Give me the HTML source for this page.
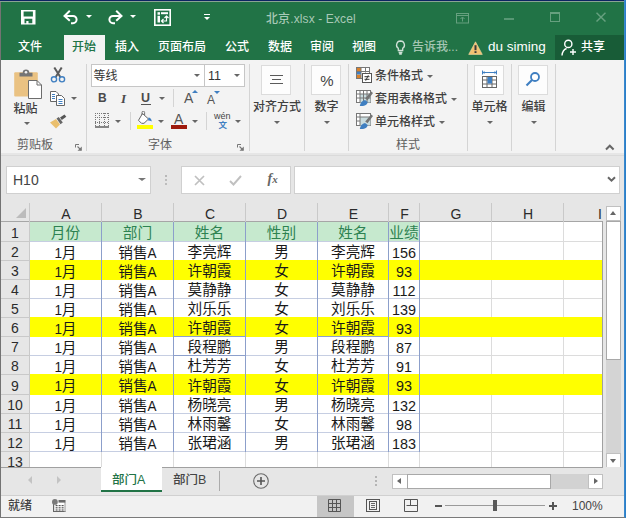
<!DOCTYPE html><html lang="zh"><head><meta charset="utf-8"><title>北京.xlsx - Excel</title><style>
*{box-sizing:border-box;margin:0;padding:0}
html,body{width:626px;height:518px;overflow:hidden;background:#fff}
body{position:relative;font-family:"Liberation Sans","Noto Sans CJK SC",sans-serif;font-size:12px;color:#444}
.a{position:absolute}
.t{position:absolute;white-space:nowrap;line-height:1;font-weight:500}
.c{text-align:center}
.w{color:#fff}
.sep{position:absolute;width:1px;background:#d4d4d4}
.ar{position:absolute;width:0;height:0;border-left:3px solid transparent;border-right:3px solid transparent;border-top:3px solid #666}
.cell{position:absolute;white-space:nowrap;text-align:center;font-size:14.670px;color:#1a1a1a;line-height:19px;height:19px}
.rh{position:absolute;left:1px;width:28px;text-align:center;font-size:14px;color:#2b2b2b;line-height:19px}
.ch{position:absolute;top:205px;text-align:center;font-size:14px;color:#2b2b2b;line-height:18px}
.l{display:inline-block;font-size:15px;transform:scaleX(0.900);margin:0 -0.500px}
.lbl{position:absolute;white-space:nowrap;line-height:1;font-size:12px;color:#606060}
.bx{position:absolute;background:#fdfdfd;border:1px solid #dcdcdc}
</style></head><body>
<div class="a" style="left:0;top:0;width:626px;height:61px;background:#75a68b"></div><div class="a" style="left:0;top:0;width:626px;height:60px;background:#217346"></div>
<div class="a" style="left:0;top:0;width:626px;height:1px;background:#0c2461"></div>
<div class="a" style="left:0;top:1px;width:626px;height:1px;background:#8aa394"></div>
<svg class="a" style="left:21px;top:10px" width="15" height="15" viewBox="0 0 15 15"><path fill-rule="evenodd" d="M0 0h14.500v14.500h-14.500z M2.600 1.500v5h9.300v-5z M3.500 8.800v4.500h1.800v-2.300h2.200v2.300h3.800v-4.500z" fill="#fff"/></svg>
<svg class="a" style="left:63px;top:9.500px" width="17" height="16" viewBox="0 0 17 16"><path d="M1.500 6h8.500a3.600 3.600 0 0 1 0 7.200h-2" fill="none" stroke="#fff" stroke-width="2"/><path d="M6.800 0.800l-5.300 5.200 5.300 4.800" fill="none" stroke="#fff" stroke-width="2"/></svg>
<div class="ar" style="left:86px;top:15px;border-top-color:#fff"></div>
<svg class="a" style="left:106px;top:9.500px" width="17" height="16" viewBox="0 0 17 16"><g transform="translate(17,0) scale(-1,1)"><path d="M1.500 6h8.500a3.600 3.600 0 0 1 0 7.200h-2" fill="none" stroke="#fff" stroke-width="2"/><path d="M6.800 0.800l-5.300 5.200 5.300 4.800" fill="none" stroke="#fff" stroke-width="2"/></g></svg>
<div class="ar" style="left:130px;top:15px;border-top-color:#fff"></div>
<svg class="a" style="left:153.500px;top:8.500px" width="17" height="17" viewBox="0 0 17 17"><rect x="0.800" y="0.800" width="15.400" height="15.400" fill="none" stroke="#fff" stroke-width="1.600"/><rect x="3.500" y="3.200" width="2.500" height="2.500" fill="#fff"/><rect x="7" y="3.200" width="7" height="2" fill="#fff"/><rect x="3.500" y="6.800" width="2.500" height="6.700" fill="#fff"/><path d="M12.500 7.500v4.500h-5 M10.500 9l2-2 2 2 M9.500 10l-2 2 2 2" fill="none" stroke="#fff" stroke-width="1.200"/></svg>
<div class="a" style="left:204px;top:14px;width:6px;height:1px;background:#fff"></div><div class="ar" style="left:204px;top:17px;border-top-color:#fff"></div>
<div class="t" style="left:266px;top:13px;font-size:12px;letter-spacing:0.120px;color:#a9c9b7">北京.xlsx - Excel</div>
<svg class="a" style="left:456px;top:12.500px" width="13" height="11" viewBox="0 0 13 11"><rect x="0.500" y="0.500" width="12" height="9.500" fill="none" stroke="#66a07f" stroke-width="1"/><path d="M0.500 2.500h12 M6.500 8.500v-4 M4.500 6l2-2 2 2" fill="none" stroke="#66a07f" stroke-width="1"/></svg>
<div class="a" style="left:504px;top:18px;width:10px;height:2px;background:#66a07f;opacity:.8"></div>
<div class="a" style="left:550px;top:12px;width:10px;height:10px;border:1px solid #66a07f;border-top-width:2px"></div>
<svg class="a" style="left:596px;top:12px" width="10" height="10" viewBox="0 0 10 10"><path d="M0.500 0.800l9 8.700 M9.500 0.800l-9 8.700" stroke="#66a07f" stroke-width="1.500"/></svg>
<div class="a" style="left:64px;top:35px;width:41px;height:26px;background:#f3f3f3"></div>
<div class="t" style="left:18px;top:41px;font-size:12px;color:#fff">文件</div>
<div class="t" style="left:72px;top:41px;font-size:12px;color:#217346">开始</div>
<div class="t" style="left:115px;top:41px;font-size:12px;color:#fff">插入</div>
<div class="t" style="left:158px;top:41px;font-size:12px;color:#fff">页面布局</div>
<div class="t" style="left:225px;top:41px;font-size:12px;color:#fff">公式</div>
<div class="t" style="left:268px;top:41px;font-size:12px;color:#fff">数据</div>
<div class="t" style="left:310px;top:41px;font-size:12px;color:#fff">审阅</div>
<div class="t" style="left:352px;top:41px;font-size:12px;color:#fff">视图</div>
<svg class="a" style="left:395px;top:40px" width="11" height="15" viewBox="0 0 11 15"><path d="M5.5 1a4 4 0 0 1 2.2 7.3v2.2h-4.4v-2.2a4 4 0 0 1 2.2-7.3z M3.6 12.5h3.8 M4.2 14h2.6" fill="none" stroke="#d0e1d7" stroke-width="1.300"/></svg>
<div class="t" style="left:412px;top:41px;font-size:12px;color:#a5c6b3">告诉我...</div>
<svg class="a" style="left:468px;top:41px" width="15" height="14" viewBox="0 0 15 14"><path d="M7.500 0.800l6.800 12.600h-13.600z" fill="#f2c271" stroke="#f7dca8" stroke-width="0.600"/><path d="M7.500 4.200v5" stroke="#3a3a3a" stroke-width="2"/><rect x="6.500" y="10.200" width="2" height="1.800" fill="#3a3a3a"/></svg>
<div class="t w" style="left:488px;top:40px;font-size:13.5px">du siming</div>
<div class="a" style="left:555px;top:35px;width:69px;height:25px;background:#185c37"></div>
<svg class="a" style="left:561px;top:38.500px" width="17" height="18" viewBox="0 0 17 18"><circle cx="7.300" cy="4.900" r="3.600" fill="none" stroke="#fff" stroke-width="1.400"/><path d="M1 16.500c0.300-3.800 2.200-6.200 4.600-7" fill="none" stroke="#fff" stroke-width="1.400"/><path d="M12 10v6 M9 13h6" stroke="#fff" stroke-width="1.400"/></svg>
<div class="t w" style="left:581px;top:40.500px;font-size:12px">共享</div>
<div class="a" style="left:1px;top:60px;width:624px;height:95px;background:#f3f3f3"></div>
<svg class="a" style="left:13px;top:68px" width="30" height="32" viewBox="0 0 30 32"><rect x="1.200" y="4.200" width="23.600" height="24.300" rx="1" fill="#eac282"/><path d="M6.500 8.400v-3.700h3.200a3.300 3.300 0 0 1 6.600 0h3.200v3.700z" fill="#757575"/><circle cx="13" cy="4.300" r="1.300" fill="#f3f3f3"/><path d="M15.500 12.500h8.500l4.500 4.500v13.500h-13z" fill="#fff" stroke="#6d6d6d" stroke-width="1"/><path d="M24 12.500v4.500h4.500" fill="none" stroke="#6d6d6d" stroke-width="1"/></svg>
<div class="t" style="left:13.500px;top:103px;font-size:12px;color:#404040">粘贴</div>
<div class="ar" style="left:24px;top:122px"></div>
<svg class="a" style="left:50px;top:67px" width="16" height="16" viewBox="0 0 16 16"><path d="M4.300 0.500l6 9.500 M11.700 0.500l-6 9.500" stroke="#5a5a5a" stroke-width="2" fill="none"/><circle cx="4" cy="12.300" r="2.600" fill="none" stroke="#3f7fc1" stroke-width="1.400"/><circle cx="12" cy="12.300" r="2.600" fill="none" stroke="#3f7fc1" stroke-width="1.400"/></svg>
<svg class="a" style="left:49px;top:90px" width="17" height="16" viewBox="0 0 17 16"><path d="M1.500 1.500h5.500l2.500 2.500v7.500h-8z" fill="#fff" stroke="#666" stroke-width="1"/><path d="M7.500 5.500h5l3 3v7h-8z" fill="#fff" stroke="#666" stroke-width="1"/><path d="M3 4.500h3 M3 6.500h3 M3 8.500h3 M9.500 9.500h4 M9.500 11.500h4 M9.500 13.500h4" stroke="#3f7fc1" stroke-width="1"/></svg>
<div class="ar" style="left:71px;top:97px"></div>
<svg class="a" style="left:49px;top:114px" width="18" height="15" viewBox="0 0 18 15"><path d="M1 8.500l6-3.500 4 5.500-4 4z" fill="#eabf6d"/><path d="M7.500 4.500l2.300-1.500 4 5.500-2.300 1.700z" fill="#666"/><path d="M11 3.500l4.500-3 1.800 2.300-4.500 3.200z" fill="#555"/></svg>
<div class="lbl" style="left:17px;top:139px">剪贴板</div>
<svg class="a" style="left:75px;top:144px" width="8" height="8" viewBox="0 0 8 8"><path d="M0.500 3.500v-3h3.500" fill="none" stroke="#777" stroke-width="1"/><path d="M2.500 2.500l3.500 3.500" fill="none" stroke="#777" stroke-width="1.100"/><path d="M6.800 2.500v4.300h-4.300z" fill="#777"/></svg>
<div class="sep" style="left:86px;top:64px;height:87px"></div>
<div class="a" style="left:91px;top:64px;width:154px;height:23px;background:#fff;border:1px solid #c6c6c6"></div>
<div class="a" style="left:204px;top:65px;width:1px;height:21px;background:#c6c6c6"></div>
<div class="t" style="left:93.500px;top:70px;font-size:12px;font-weight:400;color:#333">等线</div>
<div class="ar" style="left:194px;top:74px"></div>
<div class="t" style="left:208px;top:70px;font-size:12.500px;color:#333">11</div>
<div class="ar" style="left:234px;top:74px"></div>
<div class="t" style="left:98px;top:92px;font-size:12px;font-weight:bold;color:#4a4a4a">B</div>
<div class="t" style="left:121px;top:92px;font-size:13px;font-weight:bold;font-style:italic;color:#4a4a4a;font-family:'Liberation Serif',serif">I</div>
<div class="t" style="left:141px;top:92px;font-size:12.500px;font-weight:bold;color:#4a4a4a">U</div><div class="a" style="left:141px;top:104px;width:10px;height:1px;background:#555"></div>
<div class="ar" style="left:159px;top:97px"></div>
<div class="sep" style="left:173px;top:89px;height:18px"></div>
<div class="t" style="left:184px;top:91px;font-size:14px;color:#555">A</div>
<div class="a" style="left:192px;top:90px;width:0;height:0;border-left:3px solid transparent;border-right:3px solid transparent;border-bottom:3px solid #3f7fc1"></div>
<div class="t" style="left:207px;top:94px;font-size:12px;color:#555">A</div>
<div class="ar" style="left:214px;top:91px;border-top-color:#3f7fc1"></div>
<svg class="a" style="left:95px;top:113px" width="14" height="15" viewBox="0 0 14 15"><path d="M0 0.500h14 M0 4.500h14 M0 9.500h14 M0.500 0v14 M4.500 0v14 M9.500 0v14 M13.500 0v14" fill="none" stroke="#777" stroke-width="1" stroke-dasharray="1 1"/><path d="M0 14h14" stroke="#555" stroke-width="1.400"/></svg>
<div class="ar" style="left:115px;top:120px"></div>
<div class="sep" style="left:130px;top:112px;height:18px"></div>
<svg class="a" style="left:137px;top:111px" width="17" height="13" viewBox="0 0 17 13"><path d="M5.500 2.500l6 5.500-4.500 4.300h-2.500l-3-3z" fill="#fff" stroke="#666" stroke-width="1"/><path d="M5 4v-2.500a1.300 1.300 0 0 1 2.600 0v2.500" fill="none" stroke="#666" stroke-width="0.900"/><path d="M11.500 6.500c1.500 0 3 1.500 3.300 4-1.300-1-2.500-1-3.800-1z" fill="#3f7fc1"/></svg>
<div class="a" style="left:137px;top:125px;width:16px;height:4px;background:#ffff00"></div>
<div class="ar" style="left:158px;top:120px"></div>
<div class="t" style="left:174px;top:112px;font-size:14px;color:#555">A</div>
<div class="a" style="left:171px;top:125px;width:16px;height:4px;background:#9e1b0e"></div>
<div class="ar" style="left:192px;top:120px"></div>
<div class="sep" style="left:206px;top:112px;height:18px"></div>
<div class="t" style="left:214px;top:112px;font-size:9px;color:#444">wén</div>
<div class="t" style="left:218.500px;top:121px;font-size:8.500px;font-weight:bold;color:#3f7fc1">文</div>
<div class="ar" style="left:235px;top:120px"></div>
<div class="lbl" style="left:148px;top:139px">字体</div>
<svg class="a" style="left:237px;top:144px" width="8" height="8" viewBox="0 0 8 8"><path d="M0.500 3.500v-3h3.500" fill="none" stroke="#777" stroke-width="1"/><path d="M2.500 2.500l3.500 3.500" fill="none" stroke="#777" stroke-width="1.100"/><path d="M6.800 2.500v4.300h-4.300z" fill="#777"/></svg>
<div class="sep" style="left:249px;top:64px;height:87px"></div>
<div class="bx" style="left:261px;top:65px;width:30px;height:30px"></div>
<svg class="a" style="left:269px;top:74px" width="15" height="11" viewBox="0 0 15 11"><path d="M1 1.500h13 M3 5.500h9 M1 9.500h13" stroke="#5a5a5a" stroke-width="1.200"/></svg>
<div class="t c" style="left:250px;top:101px;width:54px;font-size:12px;color:#404040">对齐方式</div>
<div class="ar" style="left:274px;top:121px"></div>
<div class="sep" style="left:304px;top:64px;height:87px"></div>
<div class="bx" style="left:311px;top:65px;width:30px;height:30px"></div>
<div class="t c" style="left:312px;top:73px;width:30px;font-size:15px;color:#444">%</div>
<div class="t c" style="left:305px;top:101px;width:43px;font-size:12px;color:#404040">数字</div>
<div class="ar" style="left:324px;top:121px"></div>
<div class="sep" style="left:348px;top:64px;height:87px"></div>
<svg class="a" style="left:356px;top:67px" width="16" height="16" viewBox="0 0 16 16"><rect x="0.500" y="0.500" width="13" height="11" fill="#fff" stroke="#777"/><rect x="1" y="1" width="4" height="3.500" fill="#d9822b"/><rect x="1" y="7.500" width="4" height="3.500" fill="#d9822b"/><rect x="1" y="4.500" width="4" height="3" fill="#3f7fc1"/><path d="M5 0.500v11 M9.500 0.500v5 M0.500 4.500h13" stroke="#777" stroke-width="1" fill="none"/><rect x="6.500" y="6.500" width="9" height="9" fill="#fff" stroke="#555"/><path d="M8.500 9.700h5 M8.500 12.300h5 M12.300 8.300l-2.600 5.400" stroke="#333" stroke-width="1" fill="none"/></svg>
<div class="t" style="left:375px;top:70px;font-size:12px;color:#404040">条件格式</div>
<div class="ar" style="left:427px;top:75px"></div>
<svg class="a" style="left:356px;top:90px" width="17" height="16" viewBox="0 0 17 16"><rect x="0.500" y="0.500" width="14" height="12" fill="#fff" stroke="#777"/><rect x="4" y="4" width="10.500" height="8.500" fill="#c9dcdf"/><path d="M0.500 4h14 M0.500 8h14 M4 0.500v12 M7.500 0.500v12 M11 0.500v12" stroke="#777" stroke-width="1" fill="none"/><path d="M15.200 1.500l1.800 1.500-5.500 7.200-2.300-1.700z" fill="#747474"/><path d="M3.800 16c0.500-3.300 2.400-5.500 5.200-6l2.700 2c-0.300 2.900-3.700 4.600-7.900 4z" fill="#3f7fc1"/></svg>
<div class="t" style="left:375px;top:93px;font-size:12px;color:#404040">套用表格格式</div>
<div class="ar" style="left:451px;top:98px"></div>
<svg class="a" style="left:356px;top:113px" width="17" height="16" viewBox="0 0 17 16"><rect x="0.500" y="0.500" width="14" height="12" fill="#fff" stroke="#777"/><rect x="4" y="4" width="10.500" height="8.500" fill="#c9dcdf"/><path d="M0.500 4h14 M0.500 8h3.500 M4 0.500v12" stroke="#777" stroke-width="1" fill="none"/><path d="M15.200 1.500l1.800 1.500-5.500 7.200-2.300-1.700z" fill="#747474"/><path d="M3.800 16c0.500-3.300 2.400-5.500 5.200-6l2.700 2c-0.300 2.900-3.700 4.600-7.900 4z" fill="#3f7fc1"/></svg>
<div class="t" style="left:375px;top:116px;font-size:12px;color:#404040">单元格样式</div>
<div class="ar" style="left:439px;top:121px"></div>
<div class="lbl" style="left:396px;top:139px">样式</div>
<div class="sep" style="left:467px;top:64px;height:87px"></div>
<div class="bx" style="left:474px;top:65px;width:30px;height:30px"></div>
<svg class="a" style="left:481px;top:70px" width="17" height="19" viewBox="0 0 17 19"><path d="M1.500 0.500v4 M15.500 0.500v4 M1.500 2.500h14" stroke="#3f7fc1" stroke-width="1" fill="none"/><path d="M1.500 2.500l2-1.500v3z M15.500 2.500l-2-1.500v3z" fill="#3f7fc1"/><rect x="1.500" y="6.500" width="14" height="11" fill="#fff" stroke="#666"/><path d="M1.500 10h14 M1.500 14h14 M6 6.500v11 M11 6.500v11" stroke="#666" stroke-width="1" fill="none"/><rect x="6.500" y="7" width="4.500" height="6.500" fill="#3f7fc1"/></svg>
<div class="t c" style="left:468px;top:101px;width:43px;font-size:12px;color:#404040">单元格</div>
<div class="ar" style="left:487px;top:121px"></div>
<div class="sep" style="left:511px;top:64px;height:87px"></div>
<div class="bx" style="left:518px;top:65px;width:30px;height:30px"></div>
<svg class="a" style="left:525px;top:71px" width="16" height="16" viewBox="0 0 16 16"><circle cx="10" cy="6" r="4" fill="#fff" stroke="#3f7fc1" stroke-width="1.800"/><path d="M7 9l-5.500 5.500" stroke="#3f7fc1" stroke-width="2.200"/></svg>
<div class="t c" style="left:512px;top:101px;width:43px;font-size:12px;color:#404040">编辑</div>
<div class="ar" style="left:531px;top:121px"></div>
<div class="sep" style="left:555px;top:64px;height:87px"></div>
<svg class="a" style="left:605px;top:143px" width="10" height="8" viewBox="0 0 10 8"><path d="M1 6.500l3.800-3.800 3.800 3.800" fill="none" stroke="#666" stroke-width="2"/></svg>
<div class="a" style="left:1px;top:153px;width:624px;height:365px;background:#e6e6e6"></div>
<div class="a" style="left:1px;top:155px;width:624px;height:1px;background:#dadada"></div>
<div class="a" style="left:6px;top:166px;width:145px;height:28px;background:#fff;border:1px solid #d0d0d0"></div>
<div class="t" style="left:13px;top:173px;font-size:14px;color:#444">H10</div>
<div class="ar" style="left:138px;top:178px;border-left-width:4px;border-right-width:4px;border-top-width:3.500px;border-top-color:#777"></div>
<div class="a" style="left:165px;top:175px;width:2px;height:2px;background:#b8b8b8;box-shadow:0 4px 0 #bdbdbd,0 8px 0 #bdbdbd"></div>
<div class="a" style="left:181px;top:166px;width:110px;height:28px;background:#fff;border:1px solid #d0d0d0"></div>
<svg class="a" style="left:194px;top:175px" width="11" height="11" viewBox="0 0 11 11"><path d="M1 1l9 9 M10 1l-9 9" stroke="#c0c0c0" stroke-width="1.700"/></svg>
<svg class="a" style="left:229px;top:175px" width="13" height="11" viewBox="0 0 13 11"><path d="M1 6l3.500 3.500 7.500-8.500" fill="none" stroke="#c0c0c0" stroke-width="1.900"/></svg>
<div class="t" style="left:267.500px;top:172px;font-size:14px;font-style:italic;font-weight:bold;color:#666;font-family:'Liberation Serif',serif">f<span style="font-size:11px">x</span></div>
<div class="a" style="left:294px;top:166px;width:326px;height:28px;background:#fff;border:1px solid #d0d0d0"></div>
<svg class="a" style="left:606.500px;top:176px" width="9" height="7" viewBox="0 0 9 7"><path d="M1 1.200l3.500 3.500 3.500-3.500" fill="none" stroke="#666" stroke-width="2"/></svg>
<div class="a" style="left:30px;top:222px;width:573px;height:245px;background:#fff;overflow:hidden"></div>
<div class="a" style="left:1px;top:221px;width:602px;height:1px;background:#a6a6a6"></div>
<div class="a" style="left:29px;top:203px;width:1px;height:264px;background:#c9c9c9"></div>
<div class="a" style="left:16px;top:208px;width:0;height:0;border-left:10px solid transparent;border-bottom:10px solid #bcbcbc"></div>
<div class="ch" style="left:30px;width:72px">A</div>
<div class="ch" style="left:102px;width:72px">B</div>
<div class="a" style="left:101px;top:203px;width:1px;height:19px;background:#c9c9c9"></div>
<div class="ch" style="left:174px;width:72px">C</div>
<div class="a" style="left:173px;top:203px;width:1px;height:19px;background:#c9c9c9"></div>
<div class="ch" style="left:246px;width:72px">D</div>
<div class="a" style="left:245px;top:203px;width:1px;height:19px;background:#c9c9c9"></div>
<div class="ch" style="left:318px;width:71px">E</div>
<div class="a" style="left:317px;top:203px;width:1px;height:19px;background:#c9c9c9"></div>
<div class="ch" style="left:389px;width:31px">F</div>
<div class="a" style="left:388px;top:203px;width:1px;height:19px;background:#c9c9c9"></div>
<div class="ch" style="left:420px;width:72px">G</div>
<div class="a" style="left:419px;top:203px;width:1px;height:19px;background:#c9c9c9"></div>
<div class="ch" style="left:492px;width:72px">H</div>
<div class="a" style="left:491px;top:203px;width:1px;height:19px;background:#c9c9c9"></div>
<div class="a" style="left:564px;top:203px;width:39px;height:18px;overflow:hidden"><div class="ch" style="left:0;top:2px;width:72px">I</div></div>
<div class="a" style="left:563px;top:203px;width:1px;height:19px;background:#c9c9c9"></div>
<div class="a" style="left:101px;top:222px;width:1px;height:245px;background:#dcdcdc"></div>
<div class="a" style="left:173px;top:222px;width:1px;height:245px;background:#dcdcdc"></div>
<div class="a" style="left:245px;top:222px;width:1px;height:245px;background:#dcdcdc"></div>
<div class="a" style="left:317px;top:222px;width:1px;height:245px;background:#dcdcdc"></div>
<div class="a" style="left:388px;top:222px;width:1px;height:245px;background:#dcdcdc"></div>
<div class="a" style="left:419px;top:222px;width:1px;height:245px;background:#dcdcdc"></div>
<div class="a" style="left:491px;top:222px;width:1px;height:245px;background:#dcdcdc"></div>
<div class="a" style="left:563px;top:222px;width:1px;height:245px;background:#dcdcdc"></div>
<div class="a" style="left:30px;top:241px;width:573px;height:1px;background:#dcdcdc"></div>
<div class="a" style="left:1px;top:241px;width:28px;height:1px;background:#c9c9c9"></div>
<div class="a" style="left:30px;top:260px;width:573px;height:1px;background:#dcdcdc"></div>
<div class="a" style="left:1px;top:260px;width:28px;height:1px;background:#c9c9c9"></div>
<div class="a" style="left:30px;top:279px;width:573px;height:1px;background:#dcdcdc"></div>
<div class="a" style="left:1px;top:279px;width:28px;height:1px;background:#c9c9c9"></div>
<div class="a" style="left:30px;top:298px;width:573px;height:1px;background:#dcdcdc"></div>
<div class="a" style="left:1px;top:298px;width:28px;height:1px;background:#c9c9c9"></div>
<div class="a" style="left:30px;top:317px;width:573px;height:1px;background:#dcdcdc"></div>
<div class="a" style="left:1px;top:317px;width:28px;height:1px;background:#c9c9c9"></div>
<div class="a" style="left:30px;top:336px;width:573px;height:1px;background:#dcdcdc"></div>
<div class="a" style="left:1px;top:336px;width:28px;height:1px;background:#c9c9c9"></div>
<div class="a" style="left:30px;top:355px;width:573px;height:1px;background:#dcdcdc"></div>
<div class="a" style="left:1px;top:355px;width:28px;height:1px;background:#c9c9c9"></div>
<div class="a" style="left:30px;top:374px;width:573px;height:1px;background:#dcdcdc"></div>
<div class="a" style="left:1px;top:374px;width:28px;height:1px;background:#c9c9c9"></div>
<div class="a" style="left:30px;top:394px;width:573px;height:1px;background:#dcdcdc"></div>
<div class="a" style="left:1px;top:394px;width:28px;height:1px;background:#c9c9c9"></div>
<div class="a" style="left:30px;top:413px;width:573px;height:1px;background:#dcdcdc"></div>
<div class="a" style="left:1px;top:413px;width:28px;height:1px;background:#c9c9c9"></div>
<div class="a" style="left:30px;top:432px;width:573px;height:1px;background:#dcdcdc"></div>
<div class="a" style="left:1px;top:432px;width:28px;height:1px;background:#c9c9c9"></div>
<div class="a" style="left:30px;top:451px;width:573px;height:1px;background:#dcdcdc"></div>
<div class="a" style="left:1px;top:451px;width:28px;height:1px;background:#c9c9c9"></div>
<div class="rh" style="top:223px;line-height:20px">1</div>
<div class="rh" style="top:243px;line-height:19px">2</div>
<div class="rh" style="top:262px;line-height:19px">3</div>
<div class="rh" style="top:281px;line-height:19px">4</div>
<div class="rh" style="top:300px;line-height:19px">5</div>
<div class="rh" style="top:319px;line-height:19px">6</div>
<div class="rh" style="top:338px;line-height:19px">7</div>
<div class="rh" style="top:357px;line-height:19px">8</div>
<div class="rh" style="top:376px;line-height:20px">9</div>
<div class="rh" style="top:396px;line-height:19px">10</div>
<div class="rh" style="top:415px;line-height:19px">11</div>
<div class="rh" style="top:434px;line-height:19px">12</div>
<div class="a" style="left:1px;top:452px;width:28px;height:15px;overflow:hidden"><div class="rh" style="left:0px;top:0px;line-height:20px">13</div></div>
<div class="a" style="left:30px;top:241px;width:390px;height:1px;background:#c6cee2"></div>
<div class="a" style="left:30px;top:260px;width:390px;height:1px;background:#c6cee2"></div>
<div class="a" style="left:30px;top:279px;width:390px;height:1px;background:#c6cee2"></div>
<div class="a" style="left:30px;top:298px;width:390px;height:1px;background:#c6cee2"></div>
<div class="a" style="left:30px;top:317px;width:390px;height:1px;background:#c6cee2"></div>
<div class="a" style="left:30px;top:336px;width:390px;height:1px;background:#c6cee2"></div>
<div class="a" style="left:30px;top:355px;width:390px;height:1px;background:#c6cee2"></div>
<div class="a" style="left:30px;top:374px;width:390px;height:1px;background:#c6cee2"></div>
<div class="a" style="left:30px;top:394px;width:390px;height:1px;background:#c6cee2"></div>
<div class="a" style="left:30px;top:413px;width:390px;height:1px;background:#c6cee2"></div>
<div class="a" style="left:30px;top:432px;width:390px;height:1px;background:#c6cee2"></div>
<div class="a" style="left:30px;top:451px;width:390px;height:1px;background:#c6cee2"></div>
<div class="a" style="left:30px;top:222px;width:389px;height:19px;background:#c6e9ce"></div>
<div class="a" style="left:30px;top:260px;width:572px;height:20px;background:#ffff00"></div>
<div class="a" style="left:30px;top:317px;width:572px;height:20px;background:#ffff00"></div>
<div class="a" style="left:30px;top:374px;width:572px;height:21px;background:#ffff00"></div>
<div class="a" style="left:101px;top:222px;width:1px;height:230px;background:#8c9fcb"></div>
<div class="a" style="left:173px;top:222px;width:1px;height:230px;background:#8c9fcb"></div>
<div class="a" style="left:245px;top:222px;width:1px;height:230px;background:#8c9fcb"></div>
<div class="a" style="left:317px;top:222px;width:1px;height:230px;background:#8c9fcb"></div>
<div class="a" style="left:388px;top:222px;width:1px;height:230px;background:#8c9fcb"></div>
<div class="a" style="left:419px;top:222px;width:1px;height:230px;background:#8c9fcb"></div>
<div class="a" style="left:173px;top:336px;width:73px;height:1px;background:#8c9fcb"></div>
<div class="a" style="left:173px;top:355px;width:73px;height:1px;background:#8c9fcb"></div>
<div class="a" style="left:317px;top:336px;width:72px;height:1px;background:#8c9fcb"></div>
<div class="cell" style="left:26px;top:223px;width:79px;line-height:20px;color:#2d8251">月份</div>
<div class="cell" style="left:98px;top:223px;width:79px;line-height:20px;color:#2d8251">部门</div>
<div class="cell" style="left:170px;top:223px;width:79px;line-height:20px;color:#2d8251">姓名</div>
<div class="cell" style="left:242px;top:223px;width:79px;line-height:20px;color:#2d8251">性别</div>
<div class="cell" style="left:314px;top:223px;width:78px;line-height:20px;color:#2d8251">姓名</div>
<div class="cell" style="left:385px;top:223px;width:38px;line-height:20px;color:#2d8251">业绩</div>
<div class="cell" style="left:26px;top:243px;width:79px;line-height:19px"><span class="l">1</span>月</div>
<div class="cell" style="left:98px;top:243px;width:79px;line-height:19px">销售<span class="l">A</span></div>
<div class="cell" style="left:170px;top:243px;width:79px;line-height:19px">李亮辉</div>
<div class="cell" style="left:242px;top:243px;width:79px;line-height:19px">男</div>
<div class="cell" style="left:314px;top:243px;width:78px;line-height:19px">李亮辉</div>
<div class="cell" style="left:385px;top:243px;width:38px;line-height:19px;font-size:15px;transform:scaleX(0.960)">156</div>
<div class="cell" style="left:26px;top:262px;width:79px;line-height:19px"><span class="l">1</span>月</div>
<div class="cell" style="left:98px;top:262px;width:79px;line-height:19px">销售<span class="l">A</span></div>
<div class="cell" style="left:170px;top:262px;width:79px;line-height:19px">许朝霞</div>
<div class="cell" style="left:242px;top:262px;width:79px;line-height:19px">女</div>
<div class="cell" style="left:314px;top:262px;width:78px;line-height:19px">许朝霞</div>
<div class="cell" style="left:385px;top:262px;width:38px;line-height:19px;font-size:15px;transform:scaleX(0.960)">93</div>
<div class="cell" style="left:26px;top:281px;width:79px;line-height:19px"><span class="l">1</span>月</div>
<div class="cell" style="left:98px;top:281px;width:79px;line-height:19px">销售<span class="l">A</span></div>
<div class="cell" style="left:170px;top:281px;width:79px;line-height:19px">莫静静</div>
<div class="cell" style="left:242px;top:281px;width:79px;line-height:19px">女</div>
<div class="cell" style="left:314px;top:281px;width:78px;line-height:19px">莫静静</div>
<div class="cell" style="left:385px;top:281px;width:38px;line-height:19px;font-size:15px;transform:scaleX(0.960)">112</div>
<div class="cell" style="left:26px;top:300px;width:79px;line-height:19px"><span class="l">1</span>月</div>
<div class="cell" style="left:98px;top:300px;width:79px;line-height:19px">销售<span class="l">A</span></div>
<div class="cell" style="left:170px;top:300px;width:79px;line-height:19px">刘乐乐</div>
<div class="cell" style="left:242px;top:300px;width:79px;line-height:19px">女</div>
<div class="cell" style="left:314px;top:300px;width:78px;line-height:19px">刘乐乐</div>
<div class="cell" style="left:385px;top:300px;width:38px;line-height:19px;font-size:15px;transform:scaleX(0.960)">139</div>
<div class="cell" style="left:26px;top:319px;width:79px;line-height:19px"><span class="l">1</span>月</div>
<div class="cell" style="left:98px;top:319px;width:79px;line-height:19px">销售<span class="l">A</span></div>
<div class="cell" style="left:170px;top:319px;width:79px;line-height:19px">许朝霞</div>
<div class="cell" style="left:242px;top:319px;width:79px;line-height:19px">女</div>
<div class="cell" style="left:314px;top:319px;width:78px;line-height:19px">许朝霞</div>
<div class="cell" style="left:385px;top:319px;width:38px;line-height:19px;font-size:15px;transform:scaleX(0.960)">93</div>
<div class="cell" style="left:26px;top:338px;width:79px;line-height:19px"><span class="l">1</span>月</div>
<div class="cell" style="left:98px;top:338px;width:79px;line-height:19px">销售<span class="l">A</span></div>
<div class="cell" style="left:170px;top:338px;width:79px;line-height:19px">段程鹏</div>
<div class="cell" style="left:242px;top:338px;width:79px;line-height:19px">男</div>
<div class="cell" style="left:314px;top:338px;width:78px;line-height:19px">段程鹏</div>
<div class="cell" style="left:385px;top:338px;width:38px;line-height:19px;font-size:15px;transform:scaleX(0.960)">87</div>
<div class="cell" style="left:26px;top:357px;width:79px;line-height:19px"><span class="l">1</span>月</div>
<div class="cell" style="left:98px;top:357px;width:79px;line-height:19px">销售<span class="l">A</span></div>
<div class="cell" style="left:170px;top:357px;width:79px;line-height:19px">杜芳芳</div>
<div class="cell" style="left:242px;top:357px;width:79px;line-height:19px">女</div>
<div class="cell" style="left:314px;top:357px;width:78px;line-height:19px">杜芳芳</div>
<div class="cell" style="left:385px;top:357px;width:38px;line-height:19px;font-size:15px;transform:scaleX(0.960)">91</div>
<div class="cell" style="left:26px;top:376px;width:79px;line-height:20px"><span class="l">1</span>月</div>
<div class="cell" style="left:98px;top:376px;width:79px;line-height:20px">销售<span class="l">A</span></div>
<div class="cell" style="left:170px;top:376px;width:79px;line-height:20px">许朝霞</div>
<div class="cell" style="left:242px;top:376px;width:79px;line-height:20px">女</div>
<div class="cell" style="left:314px;top:376px;width:78px;line-height:20px">许朝霞</div>
<div class="cell" style="left:385px;top:376px;width:38px;line-height:20px;font-size:15px;transform:scaleX(0.960)">93</div>
<div class="cell" style="left:26px;top:396px;width:79px;line-height:19px"><span class="l">1</span>月</div>
<div class="cell" style="left:98px;top:396px;width:79px;line-height:19px">销售<span class="l">A</span></div>
<div class="cell" style="left:170px;top:396px;width:79px;line-height:19px">杨晓亮</div>
<div class="cell" style="left:242px;top:396px;width:79px;line-height:19px">男</div>
<div class="cell" style="left:314px;top:396px;width:78px;line-height:19px">杨晓亮</div>
<div class="cell" style="left:385px;top:396px;width:38px;line-height:19px;font-size:15px;transform:scaleX(0.960)">132</div>
<div class="cell" style="left:26px;top:415px;width:79px;line-height:19px"><span class="l">1</span>月</div>
<div class="cell" style="left:98px;top:415px;width:79px;line-height:19px">销售<span class="l">A</span></div>
<div class="cell" style="left:170px;top:415px;width:79px;line-height:19px">林雨馨</div>
<div class="cell" style="left:242px;top:415px;width:79px;line-height:19px">女</div>
<div class="cell" style="left:314px;top:415px;width:78px;line-height:19px">林雨馨</div>
<div class="cell" style="left:385px;top:415px;width:38px;line-height:19px;font-size:15px;transform:scaleX(0.960)">98</div>
<div class="cell" style="left:26px;top:434px;width:79px;line-height:19px"><span class="l">1</span>月</div>
<div class="cell" style="left:98px;top:434px;width:79px;line-height:19px">销售<span class="l">A</span></div>
<div class="cell" style="left:170px;top:434px;width:79px;line-height:19px">张珺涵</div>
<div class="cell" style="left:242px;top:434px;width:79px;line-height:19px">男</div>
<div class="cell" style="left:314px;top:434px;width:78px;line-height:19px">张珺涵</div>
<div class="cell" style="left:385px;top:434px;width:38px;line-height:19px;font-size:15px;transform:scaleX(0.960)">183</div>
<div class="a" style="left:606px;top:206px;width:15px;height:262px;background:#d4d4d4"></div>
<div class="a" style="left:606px;top:206px;width:15px;height:15px;background:#fff;border:1px solid #c0c0c0"></div>
<div class="a" style="left:610px;top:211px;width:0;height:0;border-left:3.500px solid transparent;border-right:3.500px solid transparent;border-bottom:4px solid #666"></div>
<div class="a" style="left:606px;top:221px;width:15px;height:139px;background:#fff;border:1px solid #a8a8a8"></div>
<div class="a" style="left:606px;top:453px;width:15px;height:15px;background:#fff;border:1px solid #c0c0c0"></div>
<div class="a" style="left:610px;top:459px;width:0;height:0;border-left:3.500px solid transparent;border-right:3.500px solid transparent;border-top:4px solid #666"></div>
<div class="a" style="left:1px;top:467px;width:623px;height:28px;background:#e6e6e6"></div>
<div class="a" style="left:1px;top:467px;width:602px;height:1px;background:#a0a0a0"></div>
<div class="a" style="left:602px;top:221px;width:1px;height:247px;background:#a0a0a0"></div>
<div class="a" style="left:28px;top:476px;width:0;height:0;border-top:4px solid transparent;border-bottom:4px solid transparent;border-right:4px solid #c3c3c3"></div>
<div class="a" style="left:57px;top:476px;width:0;height:0;border-top:4px solid transparent;border-bottom:4px solid transparent;border-left:4px solid #c3c3c3"></div>
<div class="a" style="left:101px;top:467px;width:61px;height:25px;background:#fff;border-bottom:2px solid #217346"></div>
<div class="t" style="left:112px;top:474px;font-size:12.500px;color:#217346">部门A</div>
<div class="t" style="left:173px;top:474px;font-size:12.500px;color:#444">部门B</div>
<div class="a" style="left:219px;top:471px;width:1px;height:20px;background:#ababab"></div>
<svg class="a" style="left:252px;top:472px" width="18" height="18" viewBox="0 0 18 18"><circle cx="9" cy="9" r="7.300" fill="none" stroke="#6a6a6a" stroke-width="1.100"/><path d="M9 5v8 M5 9h8" stroke="#555" stroke-width="1.600"/></svg>
<div class="a" style="left:375px;top:476px;width:2px;height:2px;background:#b5b5b5;box-shadow:0 4px 0 #b5b5b5,0 8px 0 #b5b5b5"></div>
<div class="a" style="left:392px;top:474px;width:211px;height:15px;background:#d2d2d2"></div>
<div class="a" style="left:392px;top:474px;width:16px;height:15px;background:#fff;border:1px solid #c0c0c0"></div>
<div class="a" style="left:397px;top:478px;width:0;height:0;border-top:3.500px solid transparent;border-bottom:3.500px solid transparent;border-right:4px solid #666"></div>
<div class="a" style="left:407px;top:474px;width:144px;height:15px;background:#fff;border:1px solid #a8a8a8"></div>
<div class="a" style="left:588px;top:474px;width:15px;height:15px;background:#fff;border:1px solid #c0c0c0"></div>
<div class="a" style="left:594px;top:478px;width:0;height:0;border-top:3.500px solid transparent;border-bottom:3.500px solid transparent;border-left:4px solid #666"></div>
<div class="a" style="left:1px;top:495px;width:623px;height:22px;background:#f1f1f1;border-top:1px solid #d0d0d0"></div>
<div class="t" style="left:8px;top:500px;font-size:12px;color:#444">就绪</div>
<svg class="a" style="left:52px;top:499px" width="14" height="14" viewBox="0 0 14 14"><rect x="1.500" y="1.500" width="11.500" height="11" fill="#fff"/><path d="M1.600 1v12 M1 12.500h12.500" stroke="#666" stroke-width="1.200" fill="none"/><path d="M13 1v12" stroke="#9a9a9a" stroke-width="1" fill="none"/><rect x="6.500" y="1" width="6.800" height="2.600" fill="#6a6a6a"/><circle cx="2.900" cy="2.900" r="2.900" fill="#7a7a7a"/><rect x="3.6" y="6" width="2" height="1.200" fill="#555"/><rect x="6.6" y="6" width="2" height="1.200" fill="#555"/><rect x="9.6" y="6" width="2" height="1.200" fill="#555"/><rect x="3.6" y="8.2" width="2" height="1.200" fill="#555"/><rect x="6.6" y="8.2" width="2" height="1.200" fill="#555"/><rect x="9.6" y="8.2" width="2" height="1.200" fill="#555"/><rect x="3.6" y="10.4" width="2" height="1.200" fill="#555"/><rect x="6.6" y="10.4" width="2" height="1.200" fill="#555"/><rect x="9.6" y="10.4" width="2" height="1.200" fill="#555"/></svg>
<div class="a" style="left:317px;top:496px;width:37px;height:21px;background:#c6c6c6"></div>
<svg class="a" style="left:328px;top:499px" width="13" height="13" viewBox="0 0 13 13"><path d="M0.500 0.500h12v12h-12z M0.500 4.500h12 M0.500 8.500h12 M4.500 0.500v12 M8.500 0.500v12" fill="none" stroke="#555" stroke-width="1"/></svg>
<svg class="a" style="left:366px;top:499px" width="14" height="13" viewBox="0 0 14 13"><rect x="0.500" y="0.500" width="13" height="12" fill="none" stroke="#555"/><rect x="3.500" y="2.500" width="7" height="8" fill="none" stroke="#555"/><path d="M5 4.500h4 M5 6.500h4 M5 8.500h4" stroke="#666" stroke-width="1"/></svg>
<svg class="a" style="left:404px;top:499px" width="14" height="13" viewBox="0 0 14 13"><path d="M0.500 0.500h13v12h-13z M6.500 0.500v6 M2.500 6.500h11" fill="none" stroke="#555" stroke-width="1"/></svg>
<div class="a" style="left:435px;top:505px;width:7px;height:2px;background:#555"></div>
<div class="a" style="left:445px;top:505px;width:100px;height:1px;background:#9a9a9a"></div>
<div class="a" style="left:493px;top:500px;width:4px;height:11px;background:#595959"></div>
<div class="a" style="left:549px;top:505px;width:8px;height:2px;background:#555"></div><div class="a" style="left:552px;top:502px;width:2px;height:8px;background:#555"></div>
<div class="t" style="left:572px;top:500px;font-size:12px;color:#444">100%</div>
<div class="a" style="left:0;top:2px;width:1px;height:516px;background:#737373"></div>
<div class="a" style="left:624px;top:0;width:1px;height:518px;background:#3a88cc"></div>
<div class="a" style="left:625px;top:0;width:1px;height:518px;background:#2a7fc9"></div>
<div class="a" style="left:0;top:517px;width:625px;height:1px;background:#7a7a7a"></div>
</body></html>
